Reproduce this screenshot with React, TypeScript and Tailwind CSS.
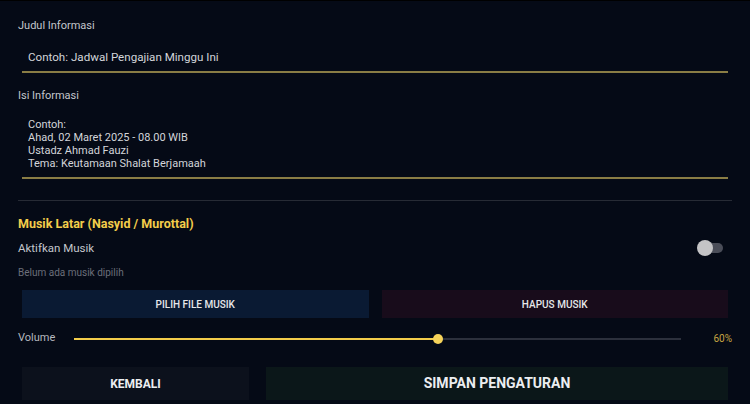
import { useState } from 'react';

export default function App() {
  const [judul, setJudul] = useState('');
  const [isi, setIsi] = useState('');
  const [musik, setMusik] = useState(false);
  const [volume] = useState(60);

  return (
    <main
      className="w-[750px] h-[404px] overflow-hidden bg-[#050a16] border-t border-black text-[#d6d8dd]"
      style={{ fontFamily: 'Roboto, "Liberation Sans", sans-serif' }}
    >
      <div className="px-[18px] pt-[18px]">
        <label className="block h-[14px] text-[11px] leading-[14px] text-[#c3c6cc]">Judul Informasi</label>
        <div className="mx-[4px] pt-[16px]">
          <input
            value={judul}
            onChange={(e) => setJudul(e.target.value)}
            placeholder="Contoh: Jadwal Pengajian Minggu Ini"
            className="block w-full h-[16px] bg-transparent outline-none pl-[6px] text-[11.6px] leading-[16px] text-[#d8dadf] placeholder:text-[#d3d5da]"
          />
          <div className="mt-[6px] h-[1.5px] bg-[#8a7d45]" />
        </div>

        <label className="block mt-[16.5px] h-[14px] text-[11px] leading-[14px] text-[#c3c6cc]">Isi Informasi</label>
        <div className="mx-[4px] pt-[15px]">
          <textarea
            value={isi}
            onChange={(e) => setIsi(e.target.value)}
            rows={4}
            placeholder={'Contoh:\nAhad, 02 Maret 2025 - 08.00 WIB\nUstadz Ahmad Fauzi\nTema: Keutamaan Shalat Berjamaah'}
            className="block w-full h-[52px] resize-none overflow-hidden bg-transparent outline-none pl-[6px] text-[11px] leading-[13px] text-[#d8dadf] placeholder:text-[#d3d5da]"
          />
          <div className="mt-[7px] h-[1.5px] bg-[#8a7d45]" />
        </div>

        <div className="mt-[21.5px] h-[1px] bg-[#272b35]" />

        <h2 className="mt-[15px] h-[15px] text-[12.5px] leading-[15px] font-bold text-[#f3cd4b]">
          Musik Latar (Nasyid / Murottal)
        </h2>

        <div className="mt-[9px] flex items-center justify-between h-[16px]">
          <span className="text-[11.5px] leading-[16px] text-[#c3c6cc]">Aktifkan Musik</span>
          <button
            onClick={() => setMusik(!musik)}
            className="relative mr-[9px] w-[26px] h-[16px]"
          >
            <span className="absolute right-0 top-[3px] h-[10px] w-[20px] rounded-full bg-[#4a4d58]" />
            <span className="absolute left-0 top-0 h-[16px] w-[16px] rounded-full bg-[#c4c4c6]" />
          </button>
        </div>

        <div className="mt-[11px] h-[12px] text-[10px] leading-[12px] text-[#6b6f7a]">Belum ada musik dipilih</div>

        <div className="mt-[11px] mx-[4px] flex gap-[13px]">
          <button className="flex-1 h-[28px] bg-[#0a1a33] text-[10px] font-medium text-[#e6e7ea]">
            PILIH FILE MUSIK
          </button>
          <button className="flex-1 h-[28px] bg-[#180c1b] text-[10px] font-medium text-[#e6e7ea]">
            HAPUS MUSIK
          </button>
        </div>

        <div className="mt-[13px] flex items-center h-[15px]">
          <span className="w-[56px] text-[11px] text-[#b5b8bf]">Volume</span>
          <div className="relative w-[607px] h-[10px] flex items-center">
            <div className="h-[2px] w-full bg-[#2c303c]" />
            <div className="absolute left-0 h-[2px] bg-[#f3cd4b]" style={{ width: `${volume}%` }} />
            <div
              className="absolute w-[10px] h-[10px] -ml-[5px] rounded-full bg-[#f6d35a]"
              style={{ left: `${volume}%` }}
            />
          </div>
          <span className="ml-auto text-[10px] text-[#c8a543]">{volume}%</span>
        </div>

        <div className="mt-[21px] mx-[4px] flex gap-[17px]">
          <button className="w-[227px] h-[33px] bg-[#0c111c] text-[12px] font-bold text-[#eceef1]">
            KEMBALI
          </button>
          <button className="flex-1 h-[33px] bg-[#0b1719] text-[14px] font-bold text-[#eceef1]">
            SIMPAN PENGATURAN
          </button>
        </div>
      </div>
    </main>
  );
}
